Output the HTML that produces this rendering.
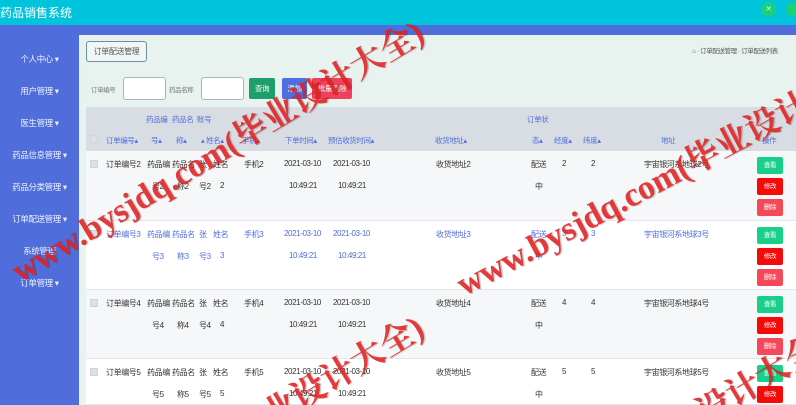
<!DOCTYPE html>
<html><head><meta charset="utf-8"><style>
*{margin:0;padding:0;box-sizing:border-box}
html,body{width:796px;height:405px;overflow:hidden}
body{position:relative;background:#e8f3ef;font-family:"Liberation Sans","Noto Sans CJK SC",sans-serif;font-size:8px;color:#333;letter-spacing:-0.4px}
.a{position:absolute;white-space:nowrap}
.top{left:0;top:0;width:796px;height:25px;background:#00c4dc}
.strip{left:0;top:25px;width:796px;height:10px;background:#4f6edb}
.side{left:0;top:25px;width:79px;height:380px;background:#4f6edb}
.m{color:#fff;font-size:8.5px;left:0;width:79px;text-align:center;opacity:.9}
.btn{color:#fff;font-size:7.5px;text-align:center;border-radius:2px}
.hd{color:#4f6edb;font-size:7.5px}
.row{left:86px;width:710px;border-bottom:1px solid #e2e6ea}
.ob{left:757px;width:26px;height:17px;line-height:17px;color:#fff;font-size:6.5px;text-align:center;border-radius:2px}
.cb{width:8px;height:8px;background:#dde0e4;border:1px solid #d0d4d8}
.wm{color:#e02020;font-family:"Liberation Serif","Noto Serif CJK SC",serif;font-size:34px;font-weight:bold;transform-origin:0 0;opacity:.88;letter-spacing:0;text-shadow:1px 1px 1px rgba(0,0,0,.25)}
</style></head><body>
<div class="a top"></div>
<div class="a" style="left:0;top:4px;color:#fff;font-size:12px;letter-spacing:0">药品销售系统</div>
<div class="a" style="left:761px;top:2px;width:15px;height:15px;border-radius:50%;background:#19d07f;color:#fff;font-size:7px;text-align:center;line-height:15px">✕</div>
<div class="a" style="left:786px;top:2px;width:15px;height:15px;border-radius:50%;background:#19d07f"></div>
<div class="a strip"></div>
<div class="a side"></div>
<div class="a m" style="top:53px">个人中心 ▾</div>
<div class="a m" style="top:85px">用户管理 ▾</div>
<div class="a m" style="top:117px">医生管理 ▾</div>
<div class="a m" style="top:149px">药品信息管理 ▾</div>
<div class="a m" style="top:181px">药品分类管理 ▾</div>
<div class="a m" style="top:213px">订单配送管理 ▾</div>
<div class="a m" style="top:245px">系统管理</div>
<div class="a m" style="top:277px">订单管理 ▾</div>
<div class="a" style="left:79px;top:35px;width:717px;height:370px;background:#e8f3ef"></div>
<div class="a" style="left:86px;top:41px;width:61px;height:21px;border:1px solid #6a8fa0;border-radius:3px;background:#f1f6f5;color:#555;font-size:8px;line-height:19px;text-align:center">订单配送管理</div>
<div class="a" style="left:692px;top:45px;color:#555;font-size:6.5px">⌂ · 订单配送管理 · 订单配送列表</div>
<div class="a" style="left:91px;top:84px;color:#777;font-size:6.5px">订单编号</div>
<div class="a" style="left:123px;top:77px;width:43px;height:23px;background:#fff;border:1px solid #aab4c0;border-radius:3px"></div>
<div class="a" style="left:169px;top:84px;color:#777;font-size:6.5px">药品名称</div>
<div class="a" style="left:201px;top:77px;width:43px;height:23px;background:#fff;border:1px solid #aab4c0;border-radius:3px"></div>
<div class="a btn" style="left:249px;top:78px;width:26px;height:21px;line-height:21px;background:#1e9e6a">查询</div>
<div class="a btn" style="left:282px;top:78px;width:25px;height:21px;line-height:21px;background:#4f6fe0">添加</div>
<div class="a btn" style="left:312px;top:78px;width:40px;height:21px;line-height:21px;background:#f0405a">批量删除</div>
<div class="a" style="left:86px;top:107px;width:710px;height:44px;background:#d8dde3"></div>
<div class="a cb" style="left:90px;top:135px"></div>
<div class="a hd" style="left:146px;top:114px">药品编</div><div class="a hd" style="left:172px;top:114px">药品名</div><div class="a hd" style="left:197px;top:114px">账号</div>
<div class="a hd" style="left:527px;top:114px">订单状</div>
<div class="a hd" style="left:106px;top:135px">订单编号▴</div><div class="a hd" style="left:151px;top:135px">号▴</div><div class="a hd" style="left:176px;top:135px">称▴</div><div class="a hd" style="left:201px;top:135px">▴ 姓名▴</div><div class="a hd" style="left:242px;top:135px">手机▴</div>
<div class="a hd" style="left:285px;top:135px">下单时间▴</div><div class="a hd" style="left:328px;top:135px">预估收货时间▴</div><div class="a hd" style="left:435px;top:135px">收货地址▴</div>
<div class="a hd" style="left:532px;top:135px">态▴</div><div class="a hd" style="left:554px;top:135px">经度▴</div><div class="a hd" style="left:583px;top:135px">纬度▴</div><div class="a hd" style="left:661px;top:135px">地址</div><div class="a hd" style="left:762px;top:135px">操作</div>

<div class="a row" style="top:151px;height:70px;background:#f6f7f8"></div>
<div class="a row" style="top:221px;height:69px;background:#fff"></div>
<div class="a row" style="top:290px;height:69px;background:#f6f7f8"></div>
<div class="a row" style="top:359px;height:46px;background:#fff"></div>

<div class="a cb" style="left:90px;top:160px"></div><div class="a cb" style="left:90px;top:230px"></div><div class="a cb" style="left:90px;top:299px"></div><div class="a cb" style="left:90px;top:368px"></div>

<div style="color:#333">
<div class="a" style="left:106px;top:159px">订单编号2</div><div class="a" style="left:147px;top:159px">药品编</div><div class="a" style="left:172px;top:159px">药品名</div><div class="a" style="left:199px;top:159px">张</div><div class="a" style="left:213px;top:159px">姓名</div><div class="a" style="left:244px;top:159px">手机2</div><div class="a" style="left:284px;top:159px">2021-03-10</div><div class="a" style="left:333px;top:159px">2021-03-10</div><div class="a" style="left:436px;top:159px">收货地址2</div><div class="a" style="left:531px;top:159px">配送</div><div class="a" style="left:562px;top:159px">2</div><div class="a" style="left:591px;top:159px">2</div><div class="a" style="left:644px;top:159px">宇宙银河系地球2号</div>
<div class="a" style="left:152px;top:181px">号2</div><div class="a" style="left:177px;top:181px">称2</div><div class="a" style="left:199px;top:181px">号2</div><div class="a" style="left:220px;top:181px">2</div><div class="a" style="left:289px;top:181px">10:49:21</div><div class="a" style="left:338px;top:181px">10:49:21</div><div class="a" style="left:535px;top:181px">中</div>
</div>
<div style="color:#4f6edb">
<div class="a" style="left:106px;top:229px">订单编号3</div><div class="a" style="left:147px;top:229px">药品编</div><div class="a" style="left:172px;top:229px">药品名</div><div class="a" style="left:199px;top:229px">张</div><div class="a" style="left:213px;top:229px">姓名</div><div class="a" style="left:244px;top:229px">手机3</div><div class="a" style="left:284px;top:229px">2021-03-10</div><div class="a" style="left:333px;top:229px">2021-03-10</div><div class="a" style="left:436px;top:229px">收货地址3</div><div class="a" style="left:531px;top:229px">配送</div><div class="a" style="left:562px;top:229px">3</div><div class="a" style="left:591px;top:229px">3</div><div class="a" style="left:644px;top:229px">宇宙银河系地球3号</div>
<div class="a" style="left:152px;top:251px">号3</div><div class="a" style="left:177px;top:251px">称3</div><div class="a" style="left:199px;top:251px">号3</div><div class="a" style="left:220px;top:251px">3</div><div class="a" style="left:289px;top:251px">10:49:21</div><div class="a" style="left:338px;top:251px">10:49:21</div><div class="a" style="left:535px;top:251px">中</div>
</div>
<div style="color:#333">
<div class="a" style="left:106px;top:298px">订单编号4</div><div class="a" style="left:147px;top:298px">药品编</div><div class="a" style="left:172px;top:298px">药品名</div><div class="a" style="left:199px;top:298px">张</div><div class="a" style="left:213px;top:298px">姓名</div><div class="a" style="left:244px;top:298px">手机4</div><div class="a" style="left:284px;top:298px">2021-03-10</div><div class="a" style="left:333px;top:298px">2021-03-10</div><div class="a" style="left:436px;top:298px">收货地址4</div><div class="a" style="left:531px;top:298px">配送</div><div class="a" style="left:562px;top:298px">4</div><div class="a" style="left:591px;top:298px">4</div><div class="a" style="left:644px;top:298px">宇宙银河系地球4号</div>
<div class="a" style="left:152px;top:320px">号4</div><div class="a" style="left:177px;top:320px">称4</div><div class="a" style="left:199px;top:320px">号4</div><div class="a" style="left:220px;top:320px">4</div><div class="a" style="left:289px;top:320px">10:49:21</div><div class="a" style="left:338px;top:320px">10:49:21</div><div class="a" style="left:535px;top:320px">中</div>
<div class="a" style="left:106px;top:367px">订单编号5</div><div class="a" style="left:147px;top:367px">药品编</div><div class="a" style="left:172px;top:367px">药品名</div><div class="a" style="left:199px;top:367px">张</div><div class="a" style="left:213px;top:367px">姓名</div><div class="a" style="left:244px;top:367px">手机5</div><div class="a" style="left:284px;top:367px">2021-03-10</div><div class="a" style="left:333px;top:367px">2021-03-10</div><div class="a" style="left:436px;top:367px">收货地址5</div><div class="a" style="left:531px;top:367px">配送</div><div class="a" style="left:562px;top:367px">5</div><div class="a" style="left:591px;top:367px">5</div><div class="a" style="left:644px;top:367px">宇宙银河系地球5号</div>
<div class="a" style="left:152px;top:389px">号5</div><div class="a" style="left:177px;top:389px">称5</div><div class="a" style="left:199px;top:389px">号5</div><div class="a" style="left:220px;top:389px">5</div><div class="a" style="left:289px;top:389px">10:49:21</div><div class="a" style="left:338px;top:389px">10:49:21</div><div class="a" style="left:535px;top:389px">中</div>
</div>

<div class="a ob" style="top:157px;background:#19d08a">查看</div><div class="a ob" style="top:178px;background:#f50a0a">修改</div><div class="a ob" style="top:199px;background:#f5495a">删除</div>
<div class="a ob" style="top:227px;background:#19d08a">查看</div><div class="a ob" style="top:248px;background:#f50a0a">修改</div><div class="a ob" style="top:269px;background:#f5495a">删除</div>
<div class="a ob" style="top:296px;background:#19d08a">查看</div><div class="a ob" style="top:317px;background:#f50a0a">修改</div><div class="a ob" style="top:338px;background:#f5495a">删除</div>
<div class="a ob" style="top:365px;background:#19d08a">查看</div><div class="a ob" style="top:386px;background:#f50a0a">修改</div>

<div class="a wm" style="left:0px;top:250px;transform:rotate(-31deg)">www.bysjdq.com(毕业设计大全)</div>
<div class="a wm" style="left:446px;top:262px;transform:rotate(-28deg)">www.bysjdq.com(毕业设计大全)</div>
<div class="a wm" style="left:0px;top:545px;transform:rotate(-31deg)">www.bysjdq.com(毕业设计大全)</div>
<div class="a wm" style="left:405px;top:560px;transform:rotate(-31deg)">www.bysjdq.com(毕业设计大全)</div>
</body></html>
